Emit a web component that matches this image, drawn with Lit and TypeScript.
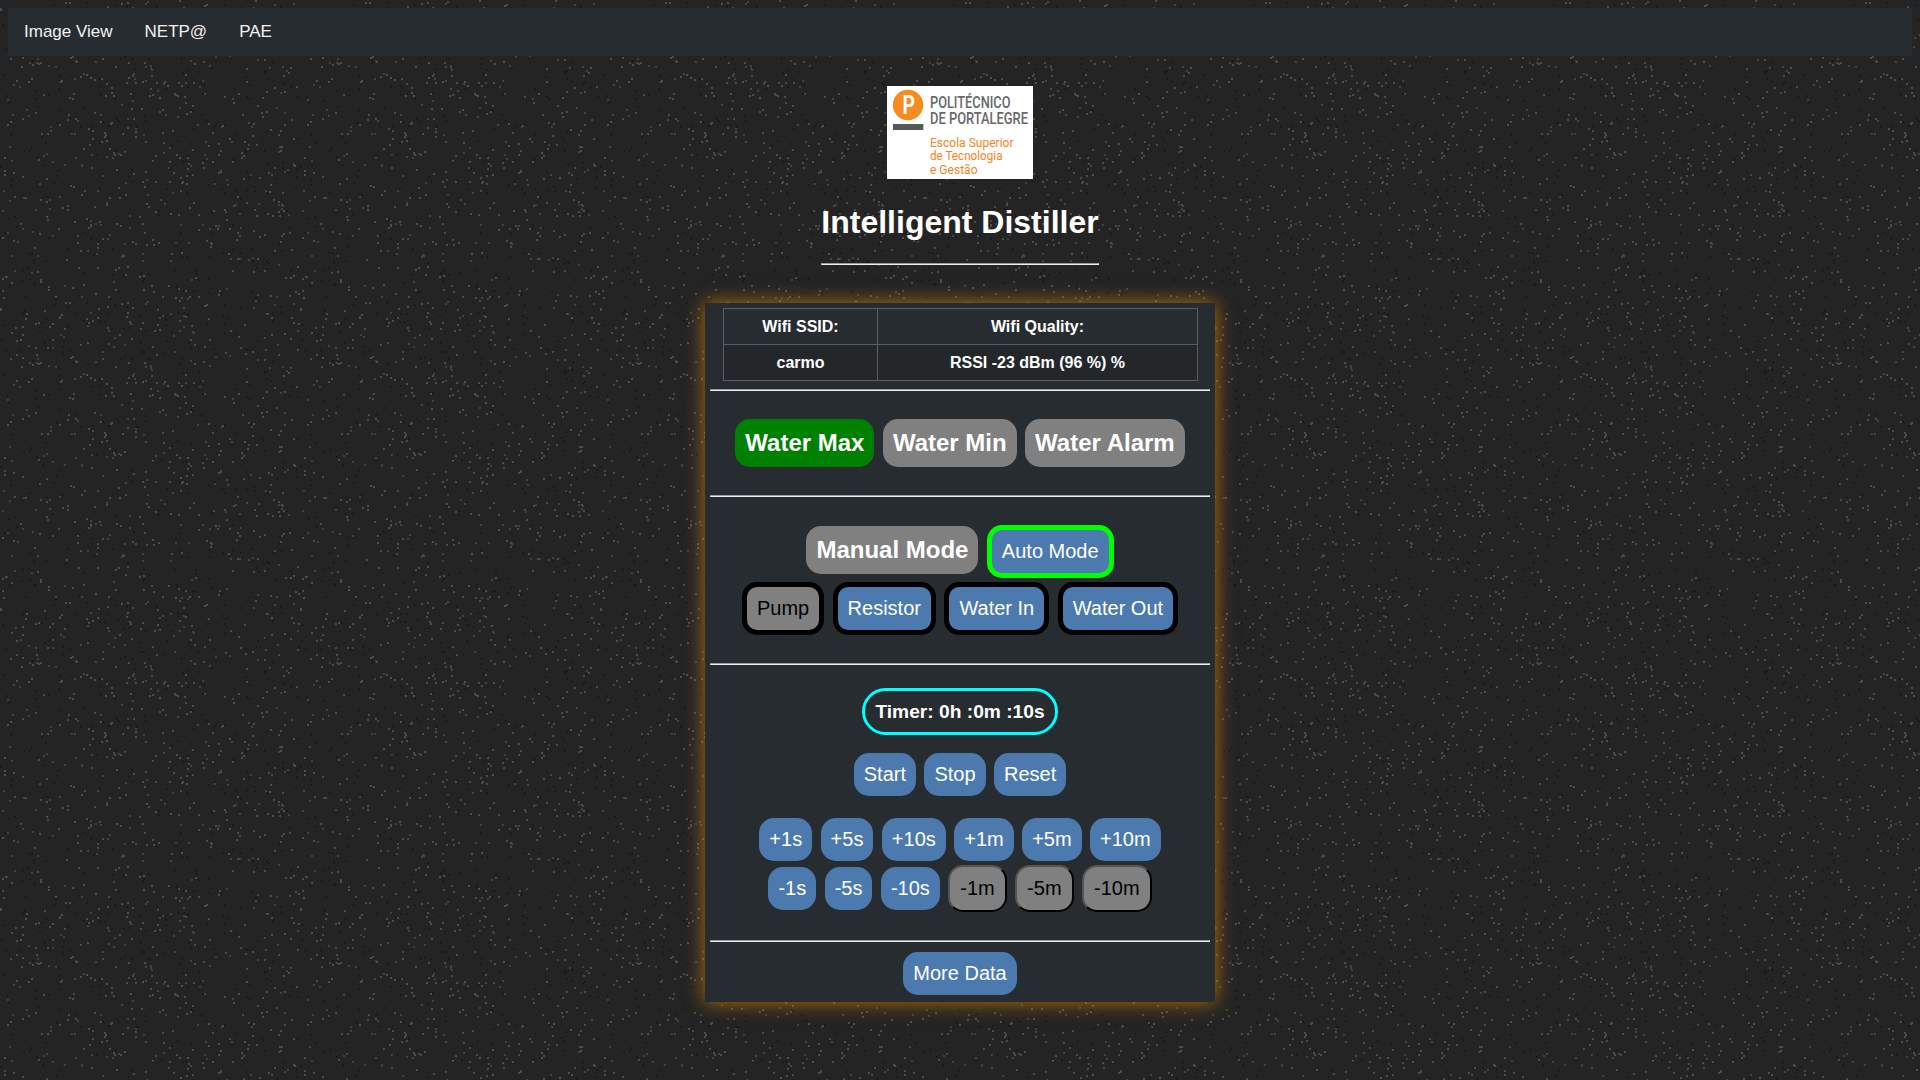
import { LitElement, html, svg, css } from "lit";
import { customElement } from "lit/decorators.js";

const TILE = 300;

/** Deterministic speckles for one repeating tile of the asphalt texture. */
function speckles(count: number, seed: number): string {
  let s = seed;
  const next = () => {
    s = (s + 0x6d2b79f5) | 0;
    let t = Math.imul(s ^ (s >>> 15), 1 | s);
    t = (t + Math.imul(t ^ (t >>> 7), 61 | t)) ^ t;
    return ((t ^ (t >>> 14)) >>> 0) / 4294967296;
  };
  let d = "";
  for (let i = 0; i < count; i++) {
    const x = Math.floor(next() * (TILE - 1));
    const y = Math.floor(next() * (TILE - 1));
    d += `M${x} ${y}h2v2h-2z`;
  }
  return d;
}

const LIGHT = speckles(430, 77);
const MID = speckles(190, 4242);
const DARK = speckles(340, 991);

type Btn = { label: string; kind?: string };

const VALVES: Btn[] = [
  { label: "Pump", kind: "framed off" },
  { label: "Resistor", kind: "framed" },
  { label: "Water In", kind: "framed" },
  { label: "Water Out", kind: "framed" },
];
const TIMER: Btn[] = [{ label: "Start" }, { label: "Stop" }, { label: "Reset" }];
const PLUS: Btn[] = ["+1s", "+5s", "+10s", "+1m", "+5m", "+10m"].map((label) => ({ label }));
const MINUS: Btn[] = [
  { label: "-1s" },
  { label: "-5s" },
  { label: "-10s" },
  { label: "-1m", kind: "raised off" },
  { label: "-5m", kind: "raised off" },
  { label: "-10m", kind: "raised off" },
];

@customElement("app-root")
export class AppRoot extends LitElement {
  static styles = css`
    :host {
      display: block;
      position: relative;
      box-sizing: border-box;
      height: 1080px;
      padding: 8px;
      overflow: hidden;
      background: #242424;
      color: #fff;
      font-family: "Liberation Sans", Arial, sans-serif;
      font-size: 16px;
    }
    .texture {
      position: absolute;
      inset: 0;
      width: 100%;
      height: 100%;
    }
    .page {
      position: relative;
      display: flex;
      flex-direction: column;
      align-items: center;
    }
    nav {
      align-self: stretch;
      display: flex;
      background: #272c30;
    }
    nav a {
      padding: 14px 16px;
      font-size: 17px;
      line-height: 20px;
      color: #f2f2f2;
      text-decoration: none;
    }
    .logo {
      display: block;
      margin-top: 30px;
      background: #fff;
      overflow: visible;
    }
    .head {
      display: flex;
      flex-direction: column;
    }
    h1 {
      margin: 25px 0 22px;
      font-size: 32px;
      line-height: 37px;
    }
    hr {
      box-sizing: border-box;
      align-self: stretch;
      height: 2px;
      margin: 0;
      border: 1px solid;
      border-color: #9a9a9a #eee #eee #9a9a9a;
    }
    .card {
      box-sizing: border-box;
      width: 510px;
      height: 699px;
      margin-top: 38px;
      padding: 5px;
      display: flex;
      flex-direction: column;
      align-items: center;
      background: #272c30;
      box-shadow: 0 0 18px rgba(255, 153, 0, 0.66);
    }
    table {
      width: 475px;
      margin: 0 0 8px 1px;
      border-collapse: collapse;
      table-layout: fixed;
      font-weight: bold;
      text-align: center;
    }
    td {
      box-sizing: border-box;
      height: 36px;
      padding: 0;
      border: 1px solid #5b5d5f;
      line-height: 18px;
    }
    .first {
      width: 154px;
    }
    .alt {
      background: #242729;
    }
    .row {
      display: flex;
      align-items: flex-start;
      justify-content: center;
      gap: 8.45px;
    }
    .lamps {
      padding: 28px 0;
    }
    .modes {
      padding-top: 28px;
    }
    .valves {
      padding: 4px 0 28px;
    }
    .start {
      padding: 18px 0 22px;
    }
    .minus {
      align-items: center;
      padding: 4px 0 28px;
    }
    .more {
      padding-top: 10px;
    }
    .lamp {
      padding: 10px;
      border-radius: 15px;
      background: #808080;
      font-size: 24px;
      line-height: 28px;
      font-weight: bold;
    }
    .on {
      background: #008000;
    }
    .manual {
      margin-top: 1px;
    }
    button {
      margin: 0;
      padding: 10px;
      border: 0;
      border-radius: 15px;
      background: #4c7aaf;
      color: #fff;
      font: 20px/23px "Liberation Sans", Arial, sans-serif;
    }
    .framed {
      border: 5px solid #000;
    }
    .lime {
      border-color: #0f0;
    }
    .raised {
      border: 2px outset #000;
    }
    .off {
      background: #808080;
      color: #000;
    }
    .timer {
      margin-top: 23px;
      padding: 10px;
      border: 3px solid #0ff;
      border-radius: 25px;
      font-size: 19.2px;
      line-height: 21px;
      font-weight: bold;
    }
    svg text {
      font-family: Roboto, sans-serif;
    }
  `;

  private buttons(items: Btn[]) {
    return items.map((b) => html`<button class=${b.kind ?? ""}>${b.label}</button>`);
  }

  private logoLine(text: string, y: number, width: number, size: number, fill: string, weight: number) {
    return svg`<text x="43" y=${y} font-size=${size} font-weight=${weight} fill=${fill}
      textLength=${width} lengthAdjust="spacingAndGlyphs">${text}</text>`;
  }

  render() {
    return html`
      <svg class="texture" aria-hidden="true" shape-rendering="crispEdges">
        <defs>
          <pattern id="asphalt" width="300" height="300" patternUnits="userSpaceOnUse">
            <path d=${DARK} fill="#1a1a1a" />
            <path d=${MID} fill="#424242" />
            <path d=${LIGHT} fill="#4d4d4d" />
          </pattern>
        </defs>
        <rect width="100%" height="100%" fill="url(#asphalt)" />
      </svg>
      <div class="page">
        <nav><a>Image View</a><a>NETP@</a><a>PAE</a></nav>
        <svg class="logo" width="146" height="93" viewBox="0 0 146 93">
          <circle cx="21" cy="19" r="15.2" fill="#f68b1f" />
          <text x="15.4" y="28.2" font-size="25" font-weight="700" fill="#fff"
            textLength="12.5" lengthAdjust="spacingAndGlyphs">P</text>
          <rect x="6" y="38" width="30.3" height="6" fill="#58585b" />
          ${this.logoLine("POLITÉCNICO", 21.7, 80.5, 15.6, "#68686b", 500)}
          ${this.logoLine("DE PORTALEGRE", 38, 98, 15.6, "#68686b", 500)}
          ${this.logoLine("Escola Superior", 60.7, 83.5, 13.6, "#f48420", 400)}
          ${this.logoLine("de Tecnologia", 74.3, 72.5, 13.6, "#f48420", 400)}
          ${this.logoLine("e Gestão", 88, 47.5, 13.6, "#f48420", 400)}
        </svg>
        <div class="head">
          <h1>Intelligent Distiller</h1>
          <hr />
        </div>
        <main class="card">
          <table>
            <tr><td class="first">Wifi SSID:</td><td>Wifi Quality:</td></tr>
            <tr class="alt"><td>carmo</td><td>RSSI -23 dBm (96 %) %</td></tr>
          </table>
          <hr />
          <div class="row lamps">
            <span class="lamp on">Water Max</span>
            <span class="lamp">Water Min</span>
            <span class="lamp">Water Alarm</span>
          </div>
          <hr />
          <div class="row modes">
            <span class="lamp manual">Manual Mode</span>
            <button class="framed lime">Auto Mode</button>
          </div>
          <div class="row valves">${this.buttons(VALVES)}</div>
          <hr />
          <div class="timer">Timer: 0h :0m :10s</div>
          <div class="row start">${this.buttons(TIMER)}</div>
          <div class="row">${this.buttons(PLUS)}</div>
          <div class="row minus">${this.buttons(MINUS)}</div>
          <hr />
          <div class="row more"><button>More Data</button></div>
        </main>
      </div>
    `;
  }
}
